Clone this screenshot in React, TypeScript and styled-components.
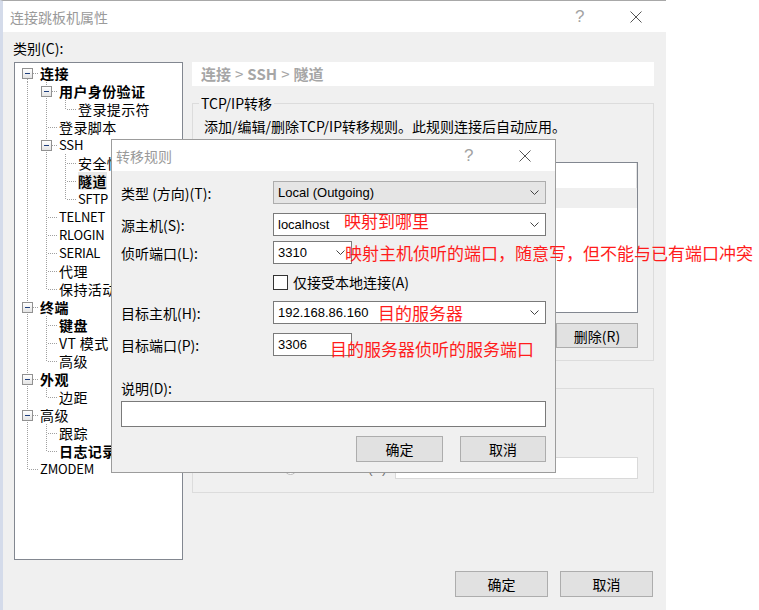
import React from 'react';
import styled, { createGlobalStyle } from 'styled-components';

const GlobalStyle = createGlobalStyle`
  html, body {
    margin: 0;
    padding: 0;
    background: #fff;
  }
  body {
    font-family: "Noto Sans CJK SC", "Liberation Sans", sans-serif;
    font-size: 14px;
    color: #000;
  }
  * {
    box-sizing: border-box;
  }
`;

const LATIN = '"Liberation Sans", "Noto Sans CJK SC", sans-serif';
const DOT = '#a0a0a0';

const Desktop = styled.div`
  position: relative;
  width: 759px;
  height: 610px;
  overflow: hidden;
  background: #fff;
`;

/* ---------- main window ---------- */

const Window = styled.div`
  width: 666px;
  height: 610px;
  display: flex;
  flex-direction: column;
  background: #f0f0f0;
  border-top: 1px solid #a8a8a8;
  border-left: 3px solid #d4dbea;
`;

const TitleBar = styled.div<{ $pad: number }>`
  height: 31px;
  flex: none;
  display: flex;
  align-items: center;
  padding-left: ${p => p.$pad}px;
  background: #fff;
`;

const TitleText = styled.span`
  color: #9a9a9a;
  font-size: 14px;
  line-height: 18px;
`;

const Controls = styled.div`
  margin-left: auto;
  display: flex;
  align-items: center;
  gap: 48px;
  padding-right: 24px;
`;

const Help = styled.span`
  font-family: ${LATIN};
  font-size: 17px;
  line-height: 18px;
  color: #a3a3a3;
  width: 7px;
`;

const CloseIcon = () => (
  <svg width="12" height="12" viewBox="0 0 12 12">
    <path d="M0.5 0.5 L11.5 11.5 M11.5 0.5 L0.5 11.5" stroke="#555" strokeWidth="1" fill="none" />
  </svg>
);

const TitleControls = () => (
  <Controls>
    <Help>?</Help>
    <CloseIcon />
  </Controls>
);

const CategoryLabel = styled.div`
  margin: 7px 0 0 10px;
  line-height: 18px;
`;

const Content = styled.div`
  display: flex;
  gap: 9px;
  margin-top: 5px;
  padding-left: 11px;
`;

/* ---------- tree ---------- */

const Tree = styled.div`
  width: 169px;
  height: 498px;
  flex: none;
  background: #fff;
  border: 1px solid #828790;
  padding: 1px 0 0 6px;
  overflow: hidden;
`;

const TreeRow = styled.div`
  display: flex;
  height: 18px;
  white-space: nowrap;
`;

type Link = 'first' | 'mid' | 'last' | 'line' | 'blank';

const Cell = styled.span<{ $link: Link; $branch: boolean }>`
  position: relative;
  width: 19px;
  height: 18px;
  flex: none;
  &::before {
    content: '';
    display: ${p => (p.$link === 'blank' ? 'none' : 'block')};
    position: absolute;
    left: 6px;
    width: 1px;
    top: ${p => (p.$link === 'first' ? 9 : 0)}px;
    bottom: ${p => (p.$link === 'last' ? 9 : 0)}px;
    background-image: linear-gradient(to bottom, ${DOT} 50%, transparent 50%);
    background-size: 1px 2px;
  }
  &::after {
    content: '';
    display: ${p => (p.$branch ? 'block' : 'none')};
    position: absolute;
    left: 8px;
    width: 10px;
    top: 9px;
    height: 1px;
    background-image: linear-gradient(to right, ${DOT} 50%, transparent 50%);
    background-size: 2px 1px;
  }
`;

const Expander = styled.span`
  position: absolute;
  left: 1px;
  top: 4px;
  width: 11px;
  height: 11px;
  z-index: 1;
  border: 1px solid #919191;
  background: linear-gradient(to bottom, #fff, #e4e4e4);
  &::after {
    content: '';
    position: absolute;
    left: 2px;
    top: 4px;
    width: 5px;
    height: 1px;
    background: #1f3f7d;
  }
`;

const TreeLabel = styled.span<{ $bold?: boolean; $selected?: boolean; $latin?: boolean }>`
  font-size: ${p => (p.$latin ? 13 : 14)}px;
  line-height: 18px;
  font-weight: ${p => (p.$bold ? 700 : 400)};
  background: ${p => (p.$selected ? '#e8e8e8' : 'transparent')};
  letter-spacing: ${p => (p.$latin ? -0.2 : 0.4)}px;
`;

type TreeNode = {
  label: string;
  guides: Link[];
  link: Link;
  open?: boolean;
  bold?: boolean;
  selected?: boolean;
};

const TREE: TreeNode[] = [
  { label: '连接', guides: [], link: 'first', open: true, bold: true },
  { label: '用户身份验证', guides: ['line'], link: 'mid', open: true, bold: true },
  { label: '登录提示符', guides: ['line', 'line'], link: 'last' },
  { label: '登录脚本', guides: ['line'], link: 'mid' },
  { label: 'SSH', guides: ['line'], link: 'mid', open: true },
  { label: '安全性', guides: ['line', 'line'], link: 'mid' },
  { label: '隧道', guides: ['line', 'line'], link: 'mid', bold: true, selected: true },
  { label: 'SFTP', guides: ['line', 'line'], link: 'last' },
  { label: 'TELNET', guides: ['line'], link: 'mid' },
  { label: 'RLOGIN', guides: ['line'], link: 'mid' },
  { label: 'SERIAL', guides: ['line'], link: 'mid' },
  { label: '代理', guides: ['line'], link: 'mid' },
  { label: '保持活动', guides: ['line'], link: 'last' },
  { label: '终端', guides: [], link: 'mid', open: true, bold: true },
  { label: '键盘', guides: ['line'], link: 'mid', bold: true },
  { label: 'VT 模式', guides: ['line'], link: 'mid' },
  { label: '高级', guides: ['line'], link: 'last' },
  { label: '外观', guides: [], link: 'mid', open: true, bold: true },
  { label: '边距', guides: ['line'], link: 'last' },
  { label: '高级', guides: [], link: 'mid', open: true },
  { label: '跟踪', guides: ['line'], link: 'mid' },
  { label: '日志记录', guides: ['line'], link: 'last', bold: true },
  { label: 'ZMODEM', guides: [], link: 'last' },
];

/* ---------- right panel ---------- */

const Panel = styled.div`
  width: 462px;
  flex: none;
  display: flex;
  flex-direction: column;
`;

const Breadcrumb = styled.div`
  height: 24px;
  background: #fff;
  padding-left: 9px;
  line-height: 24px;
  font-size: 15px;
  font-weight: 700;
  color: #a6a6a6;
`;

const Crumb = styled.span`
  font-weight: 400;
  margin: 0 4px;
`;

const Group = styled.fieldset<{ $mt: number; $h: number }>`
  margin: ${p => p.$mt}px 0 0 0;
  height: ${p => p.$h}px;
  padding: 0;
  border: 1px solid #dcdcdc;
  min-width: 0;
  display: flex;
  flex-direction: column;
`;

const Legend = styled.legend`
  margin-left: 6px;
  padding: 0 2px;
  font-size: 14px;
  line-height: 18px;
`;

const Description = styled.div`
  margin: 5px 0 0 11px;
  line-height: 18px;
  white-space: nowrap;
`;

const ListView = styled.div`
  margin: 27px 15px 0 11px;
  height: 151px;
  background: #fff;
  border: 1px solid #828790;
  display: flex;
  flex-direction: column;
`;

const ListHeader = styled.div`
  height: 25px;
  background: #fff;
  border-right: 1px solid #e3e3e3;
`;

const ListRow = styled.div`
  height: 20px;
  background: #efefef;
`;

const ButtonRow = styled.div<{ $mt: number; $pr: number; $gap: number }>`
  display: flex;
  justify-content: flex-end;
  gap: ${p => p.$gap}px;
  margin-top: ${p => p.$mt}px;
  padding-right: ${p => p.$pr}px;
`;

const Button = styled.div<{ $w: number; $h?: number }>`
  width: ${p => p.$w}px;
  height: ${p => p.$h ?? 26}px;
  display: flex;
  align-items: center;
  justify-content: center;
  background: #e1e1e1;
  border: 1px solid #adadad;
  font-size: 14px;
`;

const OptionRow = styled.div<{ $mt: number }>`
  display: flex;
  align-items: center;
  height: 22px;
  margin-top: ${p => p.$mt}px;
  padding-left: 91px;
  color: #6d6d6d;
`;

const Radio = styled.span`
  width: 13px;
  height: 13px;
  flex: none;
  margin-right: 5px;
  border-radius: 50%;
  border: 1px solid #bcbcbc;
  background: #fff;
`;

const OptionText = styled.span`
  width: 93px;
  font-family: ${LATIN};
  font-size: 13px;
`;

const DisabledBox = styled.div`
  width: 243px;
  height: 22px;
  border: 1px solid #d9d9d9;
  background: #fff;
  box-shadow: inset 0 0 0 1px #fff;
`;

const Footer = styled.div`
  display: flex;
  justify-content: flex-end;
  gap: 12px;
  margin-top: 11px;
  padding-right: 13px;
`;

/* ---------- dialog ---------- */

const Dialog = styled.div`
  position: absolute;
  left: 111px;
  top: 139px;
  width: 445px;
  height: 334px;
  display: flex;
  flex-direction: column;
  background: #f0f0f0;
  border: 1px solid #9c9c9c;
`;

const DialogBody = styled.div`
  padding: 0 9px;
  display: flex;
  flex-direction: column;
`;

const FieldRow = styled.div<{ $mt: number; $h: number }>`
  display: grid;
  grid-template-columns: 152px 1fr;
  align-items: center;
  margin-top: ${p => p.$mt}px;
  height: ${p => p.$h}px;
`;

const FieldLabel = styled.span`
  line-height: 18px;
  white-space: nowrap;
`;

const Combo = styled.div<{ $readonly?: boolean; $w?: number }>`
  width: ${p => (p.$w ? `${p.$w}px` : '100%')};
  height: 23px;
  display: flex;
  align-items: center;
  justify-content: space-between;
  padding: 0 6px 0 4px;
  background: ${p => (p.$readonly ? '#e5e5e5' : '#fff')};
  border: 1px solid ${p => (p.$readonly ? '#adadad' : '#7a7a7a')};
  font-family: ${LATIN};
  font-size: 13px;
`;

const TextBox = styled.div<{ $w?: number; $h: number }>`
  width: ${p => (p.$w ? `${p.$w}px` : '100%')};
  height: ${p => p.$h}px;
  display: flex;
  align-items: center;
  padding-left: 4px;
  background: #fff;
  border: 1px solid #7a7a7a;
  font-family: ${LATIN};
  font-size: 13px;
`;

const CheckLine = styled.label`
  display: flex;
  align-items: center;
  gap: 5px;
  line-height: 18px;
`;

const CheckBox = styled.span`
  width: 15px;
  height: 15px;
  border: 1px solid #333;
  background: #fff;
`;

const PlainLabel = styled.div<{ $mt: number }>`
  margin-top: ${p => p.$mt}px;
  line-height: 18px;
`;

const Chevron = () => (
  <svg width="9" height="5" viewBox="0 0 9 5">
    <polyline points="0.5,0.5 4.5,4.5 8.5,0.5" fill="none" stroke="#444" strokeWidth="1" />
  </svg>
);

/* ---------- annotations ---------- */

const Note = styled.div<{ $x: number; $y: number }>`
  position: absolute;
  left: ${p => p.$x}px;
  top: ${p => p.$y}px;
  font-size: 17px;
  line-height: 20px;
  color: #ff1c1c;
  white-space: nowrap;
`;

const isLatin = (s: string) => /^[A-Z ]+$/.test(s);

export default function App() {
  return (
    <Desktop>
      <GlobalStyle />
      <Window>
        <TitleBar $pad={7}>
          <TitleText>连接跳板机属性</TitleText>
          <TitleControls />
        </TitleBar>
        <CategoryLabel>类别(C):</CategoryLabel>
        <Content>
          <Tree>
            {TREE.map((n, i) => (
              <TreeRow key={i}>
                {n.guides.map((g, j) => (
                  <Cell key={j} $link={g} $branch={false} />
                ))}
                <Cell $link={n.link} $branch>
                  {n.open && <Expander />}
                </Cell>
                <TreeLabel $bold={n.bold} $selected={n.selected} $latin={isLatin(n.label)}>
                  {n.label}
                </TreeLabel>
              </TreeRow>
            ))}
          </Tree>
          <Panel>
            <Breadcrumb>
              连接<Crumb>&gt;</Crumb>SSH<Crumb>&gt;</Crumb>隧道
            </Breadcrumb>
            <Group $mt={8} $h={267}>
              <Legend>TCP/IP转移</Legend>
              <Description>添加/编辑/删除TCP/IP转移规则。此规则连接后自动应用。</Description>
              <ListView>
                <ListHeader />
                <ListRow />
              </ListView>
              <ButtonRow $mt={10} $pr={15} $gap={9}>
                <Button $w={82} $h={25}>添加(A)...</Button>
                <Button $w={82} $h={25}>编辑(E)...</Button>
                <Button $w={82} $h={25}>删除(R)</Button>
              </ButtonRow>
            </Group>
            <Group $mt={18} $h={114}>
              <Legend>X11转移</Legend>
              <OptionRow $mt={5}>转发X11连接到(X):</OptionRow>
              <OptionRow $mt={5}>
                <Radio />
                <OptionText>Xmanager(M)</OptionText>
              </OptionRow>
              <OptionRow $mt={6}>
                <Radio />
                <OptionText>X DISPLAY(D):</OptionText>
                <DisabledBox />
              </OptionRow>
            </Group>
          </Panel>
        </Content>
        <Footer>
          <Button $w={93}>确定</Button>
          <Button $w={93}>取消</Button>
        </Footer>
      </Window>

      <Dialog>
        <TitleBar $pad={4}>
          <TitleText>转移规则</TitleText>
          <TitleControls />
        </TitleBar>
        <DialogBody>
          <FieldRow $mt={10} $h={23}>
            <FieldLabel>类型 (方向)(T):</FieldLabel>
            <Combo $readonly>
              <span>Local (Outgoing)</span>
              <Chevron />
            </Combo>
          </FieldRow>
          <FieldRow $mt={9} $h={23}>
            <FieldLabel>源主机(S):</FieldLabel>
            <Combo>
              <span>localhost</span>
              <Chevron />
            </Combo>
          </FieldRow>
          <FieldRow $mt={5} $h={23}>
            <FieldLabel>侦听端口(L):</FieldLabel>
            <Combo $w={79}>
              <span>3310</span>
              <Chevron />
            </Combo>
          </FieldRow>
          <FieldRow $mt={9} $h={16}>
            <span />
            <CheckLine>
              <CheckBox />
              仅接受本地连接(A)
            </CheckLine>
          </FieldRow>
          <FieldRow $mt={12} $h={23}>
            <FieldLabel>目标主机(H):</FieldLabel>
            <Combo>
              <span>192.168.86.160</span>
              <Chevron />
            </Combo>
          </FieldRow>
          <FieldRow $mt={9} $h={23}>
            <FieldLabel>目标端口(P):</FieldLabel>
            <TextBox $w={79} $h={23}>3306</TextBox>
          </FieldRow>
          <PlainLabel $mt={23}>说明(D):</PlainLabel>
          <PlainLabel $mt={4}>
            <TextBox $h={26} />
          </PlainLabel>
          <ButtonRow $mt={9} $pr={0} $gap={17}>
            <Button $w={87}>确定</Button>
            <Button $w={86}>取消</Button>
          </ButtonRow>
        </DialogBody>
      </Dialog>

      <Note $x={344} $y={211}>映射到哪里</Note>
      <Note $x={345} $y={243}>映射主机侦听的端口，随意写，但不能与已有端口冲突</Note>
      <Note $x={378} $y={303}>目的服务器</Note>
      <Note $x={330} $y={339}>目的服务器侦听的服务端口</Note>
    </Desktop>
  );
}
